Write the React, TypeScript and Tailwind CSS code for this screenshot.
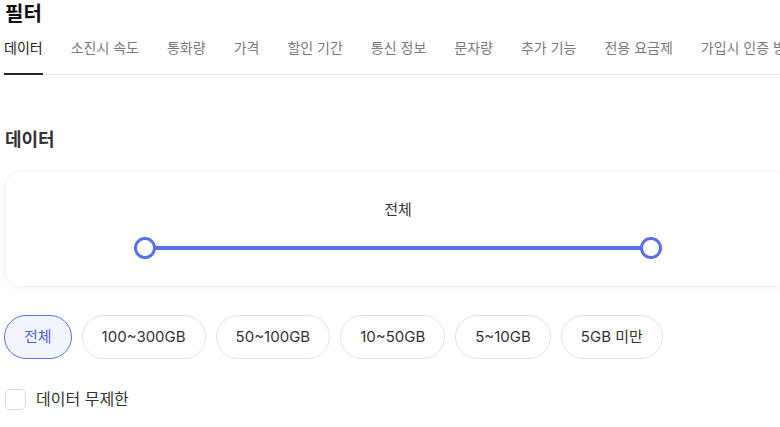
const tabs = ['데이터', '소진시 속도', '통화량', '가격', '할인 기간', '통신 정보', '문자량', '추가 기능', '전용 요금제', '가입시 인증 방법']

const chips = ['전체', '100~300GB', '50~100GB', '10~50GB', '5~10GB', '5GB 미만']

export default function App() {
  return (
    <div
      className="w-[780px] h-[427px] overflow-hidden bg-white text-[#333]"
      style={{ fontFamily: 'Inter, "Noto Sans CJK KR", sans-serif' }}
    >
      <div className="w-[800px] px-[4px]">
        {/* Title */}
        <h1 className="text-[20px] leading-[28px] font-bold text-[#111] pl-px">필터</h1>

        {/* Tabs */}
        <div className="mt-[8px] flex gap-[28px] border-b border-[#e3e4e8] whitespace-nowrap">
          {tabs.map((t, i) => (
            <div
              key={t}
              className={`text-[14px] leading-[24px] pb-[13px] border-b-2 -mb-px ${
                i === 0 ? 'border-[#222] text-[#222]' : 'border-transparent text-[#777b82]'
              }`}
            >
              {t}
            </div>
          ))}
        </div>

        {/* Section */}
        <h2 className="mt-[52px] text-[18px] leading-[26px] font-semibold text-[#333] pl-px">데이터</h2>

        <div className="mt-[18px] w-[788px] rounded-[16px] border border-[#f1f1f3] shadow-[0_2px_8px_rgba(0,0,0,0.04)] pt-[27px] pb-[27px] flex flex-col items-center">
          <div className="text-[15px] leading-[22px] text-[#333]">전체</div>
          <div className="mt-[16px] relative w-[528px] h-[22px] flex items-center">
            <div className="mx-[11px] h-[4px] flex-1 bg-[#5670ee] rounded-full" />
            <div className="absolute left-0 top-0 w-[22px] h-[22px] rounded-full bg-white border-[3px] border-[#5670ee]" />
            <div className="absolute right-0 top-0 w-[22px] h-[22px] rounded-full bg-white border-[3px] border-[#5670ee]" />
          </div>
        </div>

        {/* Chips */}
        <div className="mt-[28px] flex gap-[10px]">
          {chips.map((c, i) => (
            <div
              key={c}
              className={`h-[44px] px-[19px] rounded-full border flex items-center text-[15px] ${
                i === 0
                  ? 'bg-[#f2f4fe] border-[#5b72ee] text-[#4a63e0]'
                  : 'bg-white border-[#e2e2e6] text-[#333]'
              }`}
            >
              {c}
            </div>
          ))}
        </div>

        {/* Checkbox */}
        <label className="mt-[28px] flex items-center gap-[10px]">
          <span className="w-[21px] h-[21px] rounded-[5px] border border-[#dcdce0] bg-white ml-px" />
          <span className="text-[16px] leading-[24px] text-[#333]">데이터 무제한</span>
        </label>
      </div>
    </div>
  )
}
